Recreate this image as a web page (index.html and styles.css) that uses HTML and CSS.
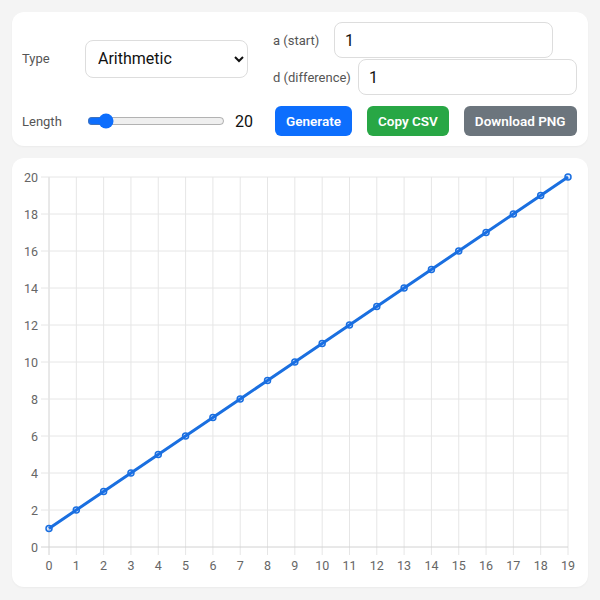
FILE: index.html
```html
<!DOCTYPE html>
<html lang="en">
<head>
    <meta charset="UTF-8">
    <meta name="viewport" content="width=device-width, initial-scale=1.0">
    <title>Sequence Plotter</title>
    <link rel="stylesheet" href="styles.css">
</head>
<body>
    <div class="panel">
        <div class="controls">
            <label class="label" for="type">Type</label>
            <select id="type">
                <option value="arithmetic">Arithmetic</option>
                <option value="geometric">Geometric</option>
                <option value="fibonacci">Fibonacci</option>
            </select>
            <div class="stack">
                <label class="field"><span>a (start)</span> <input type="number" id="start" value="1"></label>
                <label class="field"><span>d (difference)</span> <input type="number" id="diff" value="1"></label>
            </div>

            <label class="label" for="length">Length</label>
            <div class="slider-group">
                <input type="range" id="length" min="2" max="200" value="20">
                <span id="lengthValue" class="value">20</span>
            </div>
            <div class="buttons">
                <button id="generate" class="btn btn-blue">Generate</button>
                <button id="copy" class="btn btn-green">Copy CSV</button>
                <button id="download" class="btn btn-gray">Download PNG</button>
            </div>
        </div>
    </div>

    <div class="panel">
        <svg id="chart" width="556" height="409" viewBox="0 0 556 409"></svg>
    </div>

    <script src="app.js"></script>
</body>
</html>
```

FILE: styles.css
```css
body {
    margin: 0;
    padding: 12px;
    background: #f4f4f4;
    font-family: Roboto, "Liberation Sans", sans-serif;
    color: #222;
}

.panel {
    background: #fff;
    border-radius: 12px;
    padding: 10px;
    box-shadow: 0 1px 2px rgba(0, 0, 0, 0.04);
}

.panel + .panel {
    margin-top: 12px;
}

/* label | control | extra column */
.controls {
    display: grid;
    grid-template-columns: 55px 180px auto;
    column-gap: 8px;
    row-gap: 11px;
    align-items: center;
}

.label,
.field {
    font-size: 13px;
    color: #555;
    white-space: nowrap;
}

select,
input[type="number"] {
    box-sizing: border-box;
    font-family: inherit;
    font-size: 16px;
    color: #111;
    background: #fff;
    border: 1px solid #ddd;
    border-radius: 8px;
    outline: none;
}

select {
    width: 163px;
    height: 38px;
    padding: 0 6px 0 8px;
}

.stack {
    display: flex;
    flex-direction: column;
    gap: 1px;
}

.field {
    display: flex;
    align-items: center;
    gap: 7px;
}

.field span {
    min-width: 54px;
}

input[type="number"] {
    flex-shrink: 0;
    width: 219px;
    height: 36px;
    padding: 0 10px;
    -moz-appearance: textfield;
}

input[type="number"]::-webkit-inner-spin-button,
input[type="number"]::-webkit-outer-spin-button {
    -webkit-appearance: none;
    margin: 0;
}

.slider-group {
    display: flex;
    align-items: center;
    gap: 8px;
}

input[type="range"] {
    width: 138px;
    margin: 2px;
    accent-color: #0d6efd;
}

.value {
    font-size: 16px;
    color: #111;
}

.buttons {
    display: flex;
    gap: 15px;
    margin-left: 2px;
}

.btn {
    flex-shrink: 0;
    height: 30px;
    padding: 0 11px;
    border: none;
    border-radius: 6px;
    color: #fff;
    font-family: inherit;
    font-size: 13.5px;
    font-weight: 600;
    white-space: nowrap;
    cursor: pointer;
}

.btn-blue { background: #0d6efd; }
.btn-green { background: #28a745; }
.btn-gray { background: #6c757d; }

.btn:hover {
    filter: brightness(0.92);
}

#chart {
    display: block;
}

/* chart pieces */
.grid {
    stroke: #e6e6e6;
    stroke-width: 1;
}

.axis {
    stroke: #d2d2d2;
    stroke-width: 1;
}

.tick {
    font-family: Roboto, "Liberation Sans", sans-serif;
    font-size: 12.5px;
    fill: #666;
}

.tick-y { text-anchor: end; }
.tick-x { text-anchor: middle; }

.series {
    fill: none;
    stroke: #1a6fe0;
    stroke-width: 3;
    stroke-linejoin: round;
}

.point {
    fill: rgba(13, 110, 253, 0.15);
    stroke: #1a6fe0;
    stroke-width: 1.5;
}
```

FILE: app.js
```js
const svgNS = 'http://www.w3.org/2000/svg';
const chart = document.getElementById('chart');
const lengthInput = document.getElementById('length');
const lengthValue = document.getElementById('lengthValue');

// plot area inside the svg
const box = { left: 27, right: 546, top: 9, bottom: 379 };

let values = [];

function add(name, attrs, text) {
    const node = document.createElementNS(svgNS, name);
    for (const key in attrs) node.setAttribute(key, attrs[key]);
    if (text !== undefined) node.textContent = text;
    chart.appendChild(node);
    return node;
}

function niceStep(raw) {
    if (raw <= 0) return 1;
    const exp = Math.pow(10, Math.floor(Math.log10(raw)));
    const f = raw / exp;
    const nice = f <= 1 ? 1 : f <= 2 ? 2 : f <= 5 ? 5 : 10;
    return nice * exp;
}

function buildSequence() {
    const type = document.getElementById('type').value;
    const a = parseFloat(document.getElementById('start').value) || 0;
    const d = parseFloat(document.getElementById('diff').value) || 0;
    const n = parseInt(lengthInput.value, 10);
    const out = [];

    for (let i = 0; i < n; i++) {
        if (type === 'geometric') out.push(a * Math.pow(d, i));
        else if (type === 'fibonacci') out.push(i < 2 ? a : out[i - 1] + out[i - 2]);
        else out.push(a + i * d);
    }
    return out;
}

function drawChart() {
    chart.innerHTML = '';
    const n = values.length;
    const top = Math.max(...values, 0);
    const step = niceStep(top / 10);
    const steps = Math.max(1, Math.ceil(top / step));
    const yMax = steps * step;

    const xAt = i => box.left + i * (box.right - box.left) / Math.max(1, n - 1);
    const yAt = v => box.bottom - v / yMax * (box.bottom - box.top);

    // vertical grid + x labels
    values.forEach((_, i) => {
        const x = xAt(i);
        add('line', { x1: x, x2: x, y1: box.top, y2: box.bottom + 8, class: i === 0 ? 'axis' : 'grid' });
        add('text', { x: x, y: box.bottom + 23, class: 'tick tick-x' }, i);
    });

    // horizontal grid + y labels
    for (let k = 0; k <= steps; k++) {
        const v = k * step;
        const y = yAt(v);
        add('line', { x1: box.left - 8, x2: box.right, y1: y, y2: y, class: k === 0 ? 'axis' : 'grid' });
        add('text', { x: box.left - 11, y: y + 4.5, class: 'tick tick-y' }, v);
    }

    add('polyline', {
        points: values.map((v, i) => xAt(i) + ',' + yAt(v)).join(' '),
        class: 'series'
    });

    values.forEach((v, i) => add('circle', { cx: xAt(i), cy: yAt(v), r: 3, class: 'point' }));
}

function generate() {
    values = buildSequence();
    drawChart();
}

lengthInput.addEventListener('input', () => {
    lengthValue.textContent = lengthInput.value;
});

document.getElementById('generate').addEventListener('click', generate);

document.getElementById('copy').addEventListener('click', () => {
    const csv = 'n,value\n' + values.map((v, i) => i + ',' + v).join('\n');
    if (navigator.clipboard) navigator.clipboard.writeText(csv);
});

document.getElementById('download').addEventListener('click', () => {
    const data = new XMLSerializer().serializeToString(chart);
    const img = new Image();
    img.onload = () => {
        const canvas = document.createElement('canvas');
        canvas.width = chart.width.baseVal.value;
        canvas.height = chart.height.baseVal.value;
        const ctx = canvas.getContext('2d');
        ctx.fillStyle = '#fff';
        ctx.fillRect(0, 0, canvas.width, canvas.height);
        ctx.drawImage(img, 0, 0);
        const link = document.createElement('a');
        link.download = 'sequence.png';
        link.href = canvas.toDataURL('image/png');
        link.click();
    };
    img.src = 'data:image/svg+xml;charset=utf-8,' + encodeURIComponent(data);
});

generate();
```
